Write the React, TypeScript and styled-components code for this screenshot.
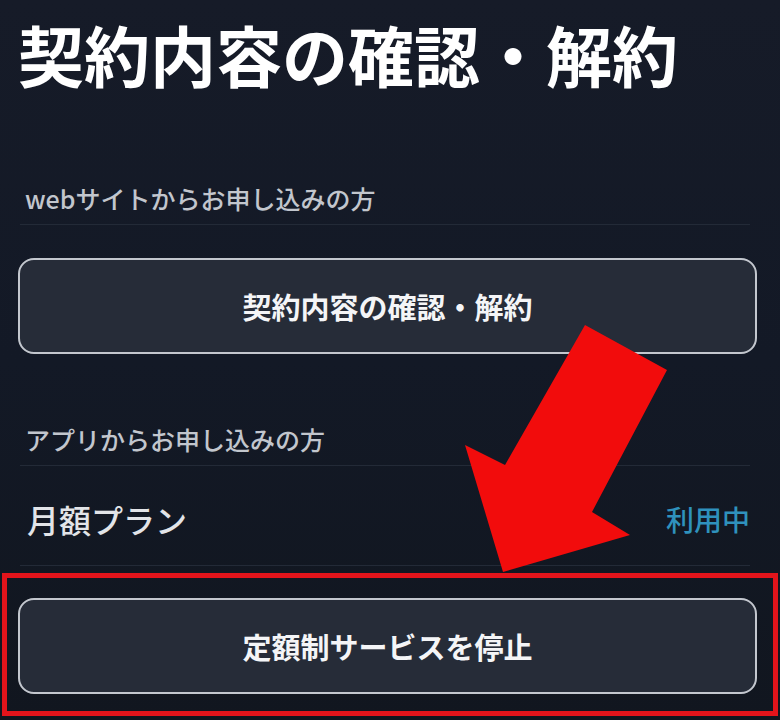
import { createGlobalStyle } from 'styled-components';
import styled from 'styled-components';

const GlobalStyle = createGlobalStyle`
  html, body {
    margin: 0;
    padding: 0;
    background: #131925;
  }
  * {
    box-sizing: border-box;
  }
`;

const Page = styled.div`
  position: relative;
  display: flex;
  flex-direction: column;
  width: 780px;
  height: 720px;
  padding: 0 23px 0 18px;
  overflow: hidden;
  background: linear-gradient(180deg, #161b28 0%, #131926 50%, #11161f 100%);
  font-family: 'Noto Sans CJK JP', 'Noto Sans', sans-serif;
`;

const Title = styled.h1`
  margin: 13px 0 0 0;
  font-size: 66px;
  line-height: 80px;
  font-weight: 700;
  color: #ffffff;
  white-space: nowrap;
`;

const SectionHeader = styled.div<{ $top: number }>`
  margin: ${p => p.$top}px 7px 0 2px;
  padding: 0 0 10px 5px;
  font-size: 25px;
  font-weight: 500;
  line-height: 32px;
  color: #c2c6cd;
  border-bottom: 1px solid #232a37;
`;

const ActionButton = styled.button<{ $top?: number }>`
  display: flex;
  align-items: center;
  justify-content: center;
  width: 100%;
  height: 96px;
  margin-top: ${p => p.$top ?? 0}px;
  border: 2px solid #c3c7ce;
  border-radius: 16px;
  background: #262c38;
  color: #f4f5f7;
  font-family: inherit;
  font-size: 29px;
  font-weight: 700;
  cursor: pointer;
`;

const PlanRow = styled.div`
  display: flex;
  align-items: center;
  justify-content: space-between;
  margin: 33px 7px 0 2px;
  padding: 0 0 26px 7px;
  height: 67px;
  border-bottom: 1px solid #232a37;
`;

const PlanName = styled.span`
  font-size: 32px;
  font-weight: 500;
  line-height: 40px;
  color: #e2e4e8;
`;

const PlanStatus = styled.span`
  font-size: 28px;
  font-weight: 500;
  line-height: 40px;
  color: #2f92bd;
`;

const Highlight = styled.div`
  margin: 7px -21px 0 -16px;
  padding: 20px 16px 17px 11px;
  border: 5px solid #e3141b;
`;

const ArrowLayer = styled.svg`
  position: absolute;
  left: 0;
  top: 0;
  width: 780px;
  height: 720px;
  pointer-events: none;
`;

export default function App() {
  return (
    <>
      <GlobalStyle />
      <Page>
        <Title>契約内容の確認・解約</Title>

        <SectionHeader $top={89}>webサイトからお申し込みの方</SectionHeader>
        <ActionButton $top={33}>契約内容の確認・解約</ActionButton>

        <SectionHeader $top={69}>アプリからお申し込みの方</SectionHeader>
        <PlanRow>
          <PlanName>月額プラン</PlanName>
          <PlanStatus>利用中</PlanStatus>
        </PlanRow>

        <Highlight>
          <ActionButton>定額制サービスを停止</ActionButton>
        </Highlight>

        {/* annotation arrow pointing at the stop button */}
        <ArrowLayer viewBox="0 0 780 720">
          <polygon
            points="585,325 667,370 592,512 630,535 503,572 465,445 505,465"
            fill="#f20c0c"
          />
        </ArrowLayer>
      </Page>
    </>
  );
}
